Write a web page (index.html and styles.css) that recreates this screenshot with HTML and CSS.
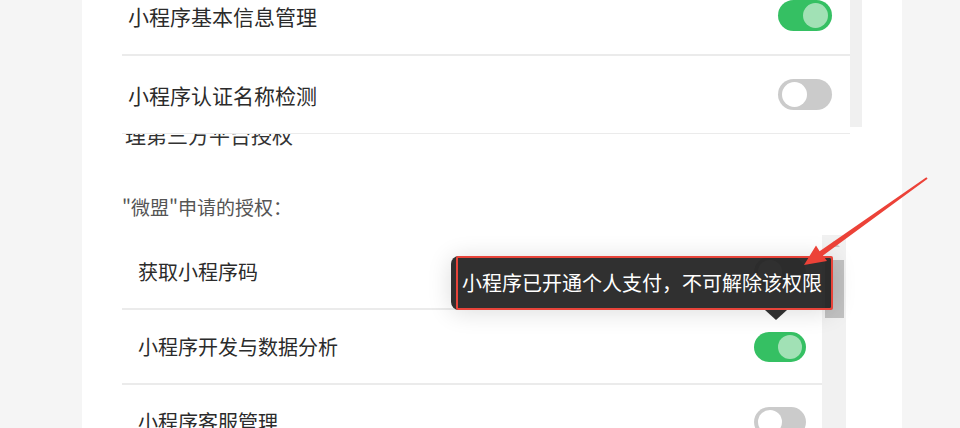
FILE: index.html
```html
<!DOCTYPE html>
<html lang="zh-CN">
<head>
<meta charset="utf-8">
<link rel="stylesheet" href="styles.css">
</head>
<body>
<div class="page">
  <div class="panel">
    <section class="top">
      <div class="top-list">
        <div class="row row-top">
          <span class="label-lg">小程序基本信息管理</span>
          <span class="toggle on"><span class="knob"></span></span>
        </div>
        <div class="row row-top">
          <span class="label-lg">小程序认证名称检测</span>
          <span class="toggle off"><span class="knob"></span></span>
        </div>
      </div>
      <div class="top-scroll"></div>
    </section>
    <section class="bottom">
      <div class="content">
        <div class="heading">理第三方平台授权</div>
        <div class="subhead">"微盟"申请的授权：</div>
        <div class="perm-box">
          <div class="perm-list">
            <div class="row row-perm">
              <span class="label">获取小程序码</span>
              <span class="toggle sm off"><span class="knob"></span></span>
            </div>
            <div class="row row-perm">
              <span class="label">小程序开发与数据分析</span>
              <span class="toggle sm on"><span class="knob"></span></span>
            </div>
            <div class="row row-perm">
              <span class="label">小程序客服管理</span>
              <span class="toggle sm off"><span class="knob"></span></span>
            </div>
          </div>
          <div class="scroll">
            <span class="scroll-up"></span>
            <span class="scroll-thumb"></span>
          </div>
        </div>
      </div>
    </section>
  </div>
</div>

<div class="tooltip">
  <div class="tooltip-mark">小程序已开通个人支付，不可解除该权限</div>
  <span class="tooltip-tail"></span>
</div>

<svg class="annot-arrow" width="960" height="428" viewBox="0 0 960 428">
  <polygon fill="#ec4238" points="804,265 827,261 823,255.6 927.6,178.8 926.4,177.2 819.6,251.2 816,245.5"/>
</svg>
</body>
</html>
```

FILE: styles.css
```css
html, body {
  margin: 0;
  padding: 0;
}
body {
  width: 960px;
  height: 428px;
  overflow: hidden;
  background: #f5f5f5;
  font-family: "Noto Sans CJK SC", "Noto Sans", sans-serif;
  color: #333;
  position: relative;
}
.page {
  display: flex;
  height: 428px;
}
.panel {
  margin-left: 82px;
  width: 820px;
  height: 428px;
  background: #fff;
  display: flex;
  flex-direction: column;
}

/* top part */
.top {
  height: 134px;
  overflow: hidden;
  display: flex;
  align-items: flex-start;
  flex: none;
}
.top-list {
  margin-left: 40px;
  width: 728px;
  margin-top: -23px;
}
.top-scroll {
  width: 12px;
  height: 127px;
  background: #f0f0f0;
}
.row {
  display: flex;
  align-items: center;
  justify-content: space-between;
  border-bottom: 2px solid #ebebeb;
  box-sizing: border-box;
}
.row-top {
  height: 79px;
  padding: 0 18px 0 6px;
}
.label-lg {
  font-size: 21px;
  color: #2b2b2b;
}

/* toggles */
.toggle {
  display: flex;
  align-items: center;
  width: 54px;
  height: 31px;
  border-radius: 16px;
  box-sizing: border-box;
  padding: 0 4px;
}
.toggle .knob {
  width: 25px;
  height: 25px;
  border-radius: 50%;
}
.toggle.on {
  background: #35c063;
  justify-content: flex-end;
}
.toggle.on .knob {
  background: #a1e1b5;
}
.toggle.off {
  background: #cbcbcb;
  justify-content: flex-start;
}
.toggle.off .knob {
  background: #fff;
}
.toggle.sm {
  width: 52px;
  height: 30px;
  padding: 0 4px;
}
.toggle.sm .knob {
  width: 24px;
  height: 24px;
}

/* bottom part */
.bottom {
  flex: 1;
  overflow: hidden;
  display: flex;
}
.content {
  margin-left: 40px;
  width: 724px;
  display: flex;
  flex-direction: column;
}
.heading {
  margin-top: -14px;
  height: 28px;
  line-height: 28px;
  font-size: 21px;
  color: #333;
  padding-left: 3px;
}
.subhead {
  margin-top: 45px;
  height: 28px;
  line-height: 28px;
  font-size: 19px;
  color: #555;
}
.perm-box {
  margin-top: 14px;
  display: flex;
  flex: 1;
}
.perm-list {
  width: 700px;
}
.row-perm {
  height: 75px;
  padding: 0 16px;
}
.label {
  font-size: 20px;
  color: #2b2b2b;
}
.scroll {
  width: 24px;
  background: #f1f1f1;
  display: flex;
  flex-direction: column;
  align-items: center;
}
.scroll-up {
  margin-top: 6px;
  width: 0;
  height: 0;
  border-left: 6px solid transparent;
  border-right: 6px solid transparent;
  border-bottom: 6px solid #c8c8c8;
}
.scroll-thumb {
  margin-top: 13px;
  width: 19px;
  height: 58px;
  background: #c1c1c1;
}

/* tooltip overlay */
.tooltip {
  position: absolute;
  left: 451px;
  top: 256px;
  width: 382px;
  height: 54px;
  background: rgba(30, 30, 30, 0.92);
  border-radius: 8px;
  box-shadow: 0 2px 24px rgba(0, 0, 0, 0.14);
}
.tooltip-mark {
  position: absolute;
  left: 5px;
  top: 0;
  width: 377px;
  height: 54px;
  box-sizing: border-box;
  border: 2px solid #e8443a;
  border-radius: 2px;
  color: #fff;
  font-size: 20px;
  line-height: 50px;
  padding-left: 4px;
  white-space: nowrap;
}
.tooltip-tail {
  position: absolute;
  left: 314px;
  top: 54px;
  width: 0;
  height: 0;
  border-left: 11px solid transparent;
  border-right: 11px solid transparent;
  border-top: 10px solid #2f2f2f;
}
.annot-arrow {
  position: absolute;
  left: 0;
  top: 0;
  pointer-events: none;
}
```
